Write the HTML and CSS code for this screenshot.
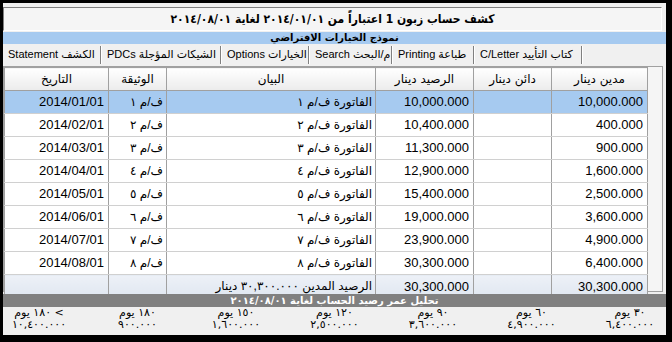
FILE: index.html
```html
<!DOCTYPE html>
<html lang="ar">

<head>
	<meta charset="UTF-8">
	<meta name="viewport" content="width=device-width, initial-scale=1.0">
	<title>كشف حساب زبون</title>
	<link rel="stylesheet" href="styles.css">
</head>

<body>

	<div class="window">
		<div class="title" dir="rtl">كشف حساب زبون 1 اعتباراً من ٢٠١٤/٠١/٠١ لغاية ٢٠١٤/٠٨/٠١</div>
		<div class="band" dir="rtl">نموذج الخيارات الافتراضي</div>

		<div class="tabs">
			<div class="tab tab-statement active">Statement الكشف</div>
			<div class="tab tab-pdcs">PDCs الشيكات المؤجلة</div>
			<div class="tab tab-options">Options الخيارات</div>
			<div class="tab tab-search">Search م/البحث</div>
			<div class="tab tab-printing">Printing طباعة</div>
			<div class="tab tab-letter">C/Letter كتاب التأييد</div>
		</div>

		<div class="grid">
			<table dir="rtl">
				<colgroup>
					<col class="c-debit">
					<col class="c-credit">
					<col class="c-balance">
					<col class="c-desc">
					<col class="c-doc">
					<col class="c-date">
				</colgroup>
				<thead>
					<tr>
						<th>مدين دينار</th>
						<th>دائن دينار</th>
						<th>الرصيد دينار</th>
						<th>البيان</th>
						<th>الوثيقة</th>
						<th>التاريخ</th>
					</tr>
				</thead>
				<tbody>
					<tr class="selected">
						<td class="num">10,000.000</td><td></td><td class="num">10,000.000</td>
						<td>الفاتورة ف/م ١</td><td>ف/م ١</td><td class="num">2014/01/01</td>
					</tr>
					<tr>
						<td class="num">400.000</td><td></td><td class="num">10,400.000</td>
						<td>الفاتورة ف/م ٢</td><td>ف/م ٢</td><td class="num">2014/02/01</td>
					</tr>
					<tr>
						<td class="num">900.000</td><td></td><td class="num">11,300.000</td>
						<td>الفاتورة ف/م ٣</td><td>ف/م ٣</td><td class="num">2014/03/01</td>
					</tr>
					<tr>
						<td class="num">1,600.000</td><td></td><td class="num">12,900.000</td>
						<td>الفاتورة ف/م ٤</td><td>ف/م ٤</td><td class="num">2014/04/01</td>
					</tr>
					<tr>
						<td class="num">2,500.000</td><td></td><td class="num">15,400.000</td>
						<td>الفاتورة ف/م ٥</td><td>ف/م ٥</td><td class="num">2014/05/01</td>
					</tr>
					<tr>
						<td class="num">3,600.000</td><td></td><td class="num">19,000.000</td>
						<td>الفاتورة ف/م ٦</td><td>ف/م ٦</td><td class="num">2014/06/01</td>
					</tr>
					<tr>
						<td class="num">4,900.000</td><td></td><td class="num">23,900.000</td>
						<td>الفاتورة ف/م ٧</td><td>ف/م ٧</td><td class="num">2014/07/01</td>
					</tr>
					<tr>
						<td class="num">6,400.000</td><td></td><td class="num">30,300.000</td>
						<td>الفاتورة ف/م ٨</td><td>ف/م ٨</td><td class="num">2014/08/01</td>
					</tr>
				</tbody>
				<tfoot>
					<tr>
						<td class="num">30,300.000</td><td></td><td class="num">30,300.000</td>
						<td>الرصيد المدين ٣٠,٣٠٠.٠٠٠ دينار</td><td></td><td></td>
					</tr>
				</tfoot>
			</table>
		</div>

		<div class="aging-title" dir="rtl">تحليل عمر رصيد الحساب لغاية ٢٠١٤/٠٨/٠١</div>

		<!-- aging buckets, first one sits on the right -->
		<div class="aging" dir="rtl">
			<div class="bucket"><span>٣٠ يوم</span><span>٦,٤٠٠.٠٠٠</span></div>
			<div class="bucket"><span>٦٠ يوم</span><span>٤,٩٠٠.٠٠٠</span></div>
			<div class="bucket"><span>٩٠ يوم</span><span>٣,٦٠٠.٠٠٠</span></div>
			<div class="bucket"><span>١٢٠ يوم</span><span>٢,٥٠٠.٠٠٠</span></div>
			<div class="bucket"><span>١٥٠ يوم</span><span>١,٦٠٠.٠٠٠</span></div>
			<div class="bucket"><span>١٨٠ يوم</span><span>٩٠٠.٠٠٠</span></div>
			<div class="bucket"><span>&gt; ١٨٠ يوم</span><span>١٠,٤٠٠.٠٠٠</span></div>
		</div>
	</div>

</body>

</html>
```

FILE: styles.css
```css
/* statement window, old windows look */
body {
	margin: 0;
	height: 342px;
	overflow: hidden;
	background-color: #000;
	font-family: "Liberation Sans", "DejaVu Sans", sans-serif;
	color: #000;
}

.window {
	margin: 3px 6px 0 3px;
	height: 332px;
	background-color: #f0f0f0;
	display: flex;
	flex-direction: column;
}

.title {
	margin: 4px 4px 0 0;
	height: 22px;
	line-height: 22px;
	border: 1px solid;
	border-color: #808080 #ffffff #ffffff #808080;
	background-color: #f5f5f5;
	text-align: center;
	font-family: "DejaVu Sans Condensed", "DejaVu Sans", sans-serif;
	font-size: 12px;
	font-weight: bold;
}

.band {
	margin-top: 1px;
	height: 12px;
	line-height: 12px;
	background-color: #a6caf0;
	text-align: center;
	font-family: "DejaVu Sans", sans-serif;
	font-size: 10px;
	font-weight: bold;
}

/* tab strip */
.tabs {
	display: flex;
	height: 20px;
	padding: 2px 0 0 1px;
	box-sizing: border-box;
}

.tab {
	flex: none;
	box-sizing: border-box;
	padding-left: 4px;
	margin-right: 2px;
	border-right: 1px solid #808080;
	box-shadow: 1px 0 0 #ffffff;
	font-size: 11px;
	line-height: 17px;
	white-space: nowrap;
}

.tab-statement { width: 97px; }
.tab-pdcs { width: 118px; }
.tab-options { width: 86px; }
.tab-search { width: 81px; }
.tab-printing { width: 80px; }
.tab-letter { width: 106px; }

/* grid */
.grid {
	margin: 2px 3px 0 0;
	height: 224px;
	border: 1px solid #a0a0a0;
	background-color: #f5f5f5;
}

.grid table {
	width: 643px;
	table-layout: fixed;
	border-collapse: collapse;
	font-size: 13px;
}

.c-debit { width: 96px; }
.c-credit { width: 78px; }
.c-balance { width: 98px; }
.c-desc { width: 209px; }
.c-doc { width: 58px; }
.c-date { width: 104px; }

.grid th {
	height: 22px;
	padding: 0;
	border: 1px solid #a0a0a0;
	background: linear-gradient(#ffffff, #ebebeb);
	font-family: "DejaVu Sans", sans-serif;
	font-size: 12px;
	font-weight: normal;
}

.grid td {
	height: 21px;
	padding: 0 3px 1px 3px;
	border-left: 1px solid #a0a0a0;
	border-right: 1px solid #a0a0a0;
	border-bottom: 1px solid #d0d0d0;
	background-color: #ffffff;
	white-space: nowrap;
	overflow: hidden;
	font-size: 12px;
}

.grid td.num {
	padding-right: 4px;
	font-size: 13px;
}

.grid tr.selected td {
	background-color: #a6caf0;
}

.grid tfoot td {
	height: 22px;
	border-top: 1px solid #a0a0a0;
	border-bottom: 1px solid #a0a0a0;
	background: linear-gradient(#edf1f7, #dfe6f0);
}

/* aging */
.aging-title {
	margin-top: 2px;
	height: 13px;
	line-height: 13px;
	background-color: #808080;
	color: #ffffff;
	text-align: center;
	font-family: "DejaVu Sans", sans-serif;
	font-size: 10px;
	font-weight: bold;
}

.aging {
	display: flex;
	justify-content: space-between;
	padding: 0 7px;
}

.bucket {
	width: 58px;
	display: flex;
	flex-direction: column;
	align-items: center;
	font-family: "DejaVu Sans", sans-serif;
	font-size: 11px;
	line-height: 12px;
}
```
